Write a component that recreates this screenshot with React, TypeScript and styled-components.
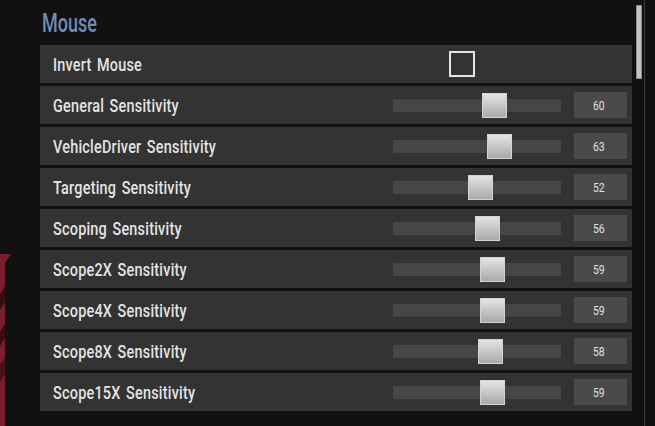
import React from "react";
import styled, { createGlobalStyle } from "styled-components";

const Global = createGlobalStyle`
  html, body { margin: 0; padding: 0; background: #111111; }
  body { width: 655px; height: 426px; overflow: hidden; }
`;

const FONT = `Roboto, "Liberation Sans", sans-serif`;

const Page = styled.div`
  display: flex;
  width: 655px;
  height: 426px;
  background: #111111;
  font-family: ${FONT};
`;

const Gutter = styled.div`
  width: 40px;
  flex: none;
  padding-top: 254px;
  box-sizing: border-box;
`;

const Content = styled.div`
  width: 592px;
  flex: none;
  display: flex;
  flex-direction: column;
`;

const Title = styled.h1`
  margin: 0;
  height: 45px;
  line-height: 47px;
  padding-left: 2px;
  font-size: 25px;
  font-weight: 500;
  color: #6f8cb4;
  font-family: ${FONT};
`;

const Narrow = styled.span<{ $k: number }>`
  display: inline-block;
  white-space: nowrap;
  transform: scaleX(${(p) => p.$k});
  transform-origin: left center;
`;

const Row = styled.div`
  height: 38px;
  margin-bottom: 3px;
  background: #333333;
  display: flex;
  align-items: center;
  padding: 0 5px 0 13px;
  box-sizing: border-box;
`;

const Label = styled.span`
  flex: 1;
  color: #e4e4e4;
  font-size: 18px;
  font-weight: 500;
  letter-spacing: 0.3px;
  word-spacing: 2px;
  font-family: ${FONT};
`;

const Controls = styled.div`
  width: 234px;
  display: flex;
  align-items: center;
  gap: 13px;
`;

const Checkbox = styled.div`
  width: 26px;
  height: 26px;
  box-sizing: border-box;
  border: 2px solid #e6e6e6;
  margin-left: 56px;
`;

const Track = styled.div`
  position: relative;
  width: 168px;
  height: 13px;
  background: #464646;
`;

const Thumb = styled.div`
  position: absolute;
  top: -6px;
  width: 25px;
  height: 25px;
  margin-left: -12px;
  box-sizing: border-box;
  border: 1px solid #d4d4d4;
  background: linear-gradient(#e4e4e4, #a9a9a9);
`;

const ValueBox = styled.div`
  width: 53px;
  height: 26px;
  background: #4a4a4a;
  color: #e0e0e0;
  font-size: 13px;
  display: flex;
  align-items: center;
  justify-content: center;
  font-family: ${FONT};
`;

const ScrollCol = styled.div`
  flex: 1;
  position: relative;
  display: flex;
  justify-content: center;
  padding-left: 1px;
`;

const ScrollLine = styled.div`
  width: 1px;
  height: 100%;
  background: #3a3a3a;
`;

const ScrollThumb = styled.div`
  position: absolute;
  top: 5px;
  left: 4px;
  width: 6px;
  height: 74px;
  box-sizing: border-box;
  border: 1px solid #8a8a8a;
  background: #c4c4c4;
`;

const sliders: [string, number][] = [
  ["General Sensitivity", 60],
  ["VehicleDriver Sensitivity", 63],
  ["Targeting Sensitivity", 52],
  ["Scoping Sensitivity", 56],
  ["Scope2X Sensitivity", 59],
  ["Scope4X Sensitivity", 59],
  ["Scope8X Sensitivity", 58],
  ["Scope15X Sensitivity", 59],
];

const Decoration = () => (
  <svg width="12" height="172" viewBox="0 0 12 172">
    <path d="M0 0 H11 L5 9 V172 H0 Z" fill="#7a1e2b" />
    <path d="M0 40 L5 32 V48 L0 56 Z" fill="#3a0d14" />
    <path d="M0 78 L5 70 V84 L0 92 Z" fill="#3a0d14" />
    <path d="M0 110 L5 104 V120 L0 128 Z" fill="#4a1018" />
  </svg>
);

export default function App() {
  return (
    <Page>
      <Global />
      <Gutter>
        <Decoration />
      </Gutter>
      <Content>
        <Title>
          <Narrow $k={0.72}>Mouse</Narrow>
        </Title>
        <Row>
          <Label>
            <Narrow $k={0.8}>Invert Mouse</Narrow>
          </Label>
          <Controls>
            <Checkbox />
          </Controls>
        </Row>
        {sliders.map(([name, v]) => (
          <Row key={name}>
            <Label>
              <Narrow $k={0.8}>{name}</Narrow>
            </Label>
            <Controls>
              <Track>
                <Thumb style={{ left: `${(v / 100) * 168}px` }} />
              </Track>
              <ValueBox>
                <Narrow $k={0.8}>{v}</Narrow>
              </ValueBox>
            </Controls>
          </Row>
        ))}
      </Content>
      <ScrollCol>
        <ScrollLine />
        <ScrollThumb />
      </ScrollCol>
    </Page>
  );
}
